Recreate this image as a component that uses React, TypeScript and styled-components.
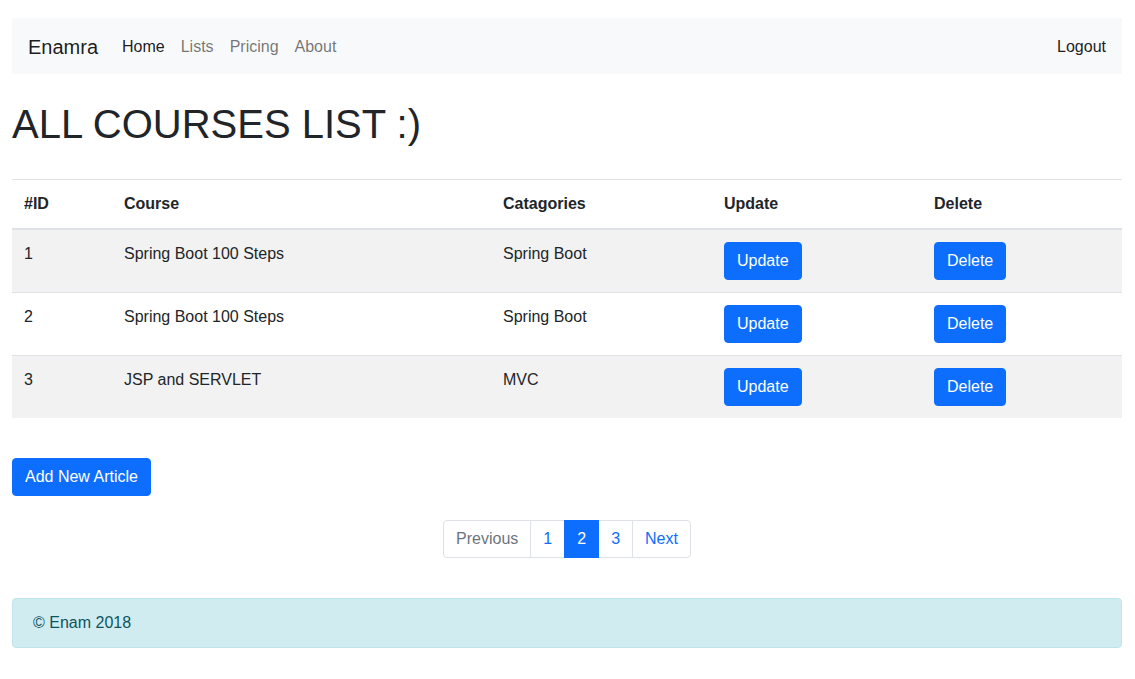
import React from "react";
import styled, { createGlobalStyle } from "styled-components";

const GlobalStyle = createGlobalStyle`
  * { box-sizing: border-box; }
  body {
    margin: 0;
    font-family: "Liberation Sans", Arial, sans-serif;
    font-size: 16px;
    line-height: 24px;
    color: #212529;
    background: #fff;
  }
`;

const Page = styled.div`
  width: 1110px;
  margin: 0 12px;
  padding-top: 18px;
`;

const Navbar = styled.nav`
  display: flex;
  align-items: center;
  height: 56px;
  padding: 1px 16px 0;
  background: #f8f9fa;
`;

const Brand = styled.a`
  font-size: 20px;
  line-height: 30px;
  color: rgba(0, 0, 0, 0.9);
  text-decoration: none;
  margin-right: 16px;
`;

const NavList = styled.div`
  display: flex;
  flex: 1;
`;

const NavLink = styled.a<{ $active?: boolean }>`
  padding: 8px;
  color: ${(p) => (p.$active ? "rgba(0,0,0,0.9)" : "rgba(0,0,0,0.55)")};
  text-decoration: none;
`;

const LogoutLink = styled.a`
  padding: 8px 0;
  color: rgba(0, 0, 0, 0.9);
  text-decoration: none;
`;

const Title = styled.h1`
  font-size: 40px;
  line-height: 48px;
  font-weight: 400;
  margin: 26px 0 31px;
`;

const Table = styled.table`
  width: 100%;
  border-collapse: collapse;
  margin-bottom: 40px;
`;

const Th = styled.th<{ $w?: number }>`
  text-align: left;
  font-weight: 700;
  padding: 12px;
  border-top: 1px solid #dee2e6;
  border-bottom: 2px solid #dee2e6;
  width: ${(p) => (p.$w ? `${p.$w}px` : "auto")};
`;

const Tr = styled.tr<{ $striped?: boolean }>`
  background: ${(p) => (p.$striped ? "#f2f2f2" : "#fff")};
`;

const Td = styled.td`
  padding: 12px;
  vertical-align: top;
  border-top: 1px solid #dee2e6;
`;

const Button = styled.button`
  font-family: inherit;
  font-size: 16px;
  line-height: 24px;
  padding: 6px 12px;
  color: #fff;
  background: #0d6efd;
  border: 1px solid #0d6efd;
  border-radius: 4px;
  cursor: pointer;
`;

const Pagination = styled.ul`
  display: flex;
  justify-content: center;
  list-style: none;
  padding: 0;
  margin: 24px 0 40px;
`;

const PageItem = styled.li<{ $active?: boolean; $disabled?: boolean; $first?: boolean; $last?: boolean }>`
  padding: 6px 12px;
  line-height: 24px;
  border: 1px solid ${(p) => (p.$active ? "#0d6efd" : "#dee2e6")};
  margin-left: ${(p) => (p.$first ? "0" : "-1px")};
  background: ${(p) => (p.$active ? "#0d6efd" : "#fff")};
  color: ${(p) => (p.$active ? "#fff" : p.$disabled ? "#6c757d" : "#0d6efd")};
  border-radius: ${(p) => (p.$first ? "4px 0 0 4px" : p.$last ? "0 4px 4px 0" : "0")};
  position: relative;
  z-index: ${(p) => (p.$active ? 1 : 0)};
`;

const Footer = styled.div`
  padding: 12px 20px;
  background: #d1ecf1;
  border: 1px solid #bee5eb;
  color: #0c5460;
  border-radius: 4px;
`;

const rows = [
  { id: 1, course: "Spring Boot 100 Steps", cat: "Spring Boot" },
  { id: 2, course: "Spring Boot 100 Steps", cat: "Spring Boot" },
  { id: 3, course: "JSP and SERVLET", cat: "MVC" },
];

export default function App() {
  return (
    <Page>
      <GlobalStyle />
      <Navbar>
        <Brand href="#">Enamra</Brand>
        <NavList>
          <NavLink $active href="#">Home</NavLink>
          <NavLink href="#">Lists</NavLink>
          <NavLink href="#">Pricing</NavLink>
          <NavLink href="#">About</NavLink>
        </NavList>
        <LogoutLink href="#">Logout</LogoutLink>
      </Navbar>
      <Title>ALL COURSES LIST :)</Title>
      <Table>
        <thead>
          <tr>
            <Th $w={100}>#ID</Th>
            <Th $w={379}>Course</Th>
            <Th $w={221}>Catagories</Th>
            <Th $w={210}>Update</Th>
            <Th>Delete</Th>
          </tr>
        </thead>
        <tbody>
          {rows.map((r, i) => (
            <Tr key={r.id} $striped={i % 2 === 0}>
              <Td>{r.id}</Td>
              <Td>{r.course}</Td>
              <Td>{r.cat}</Td>
              <Td><Button>Update</Button></Td>
              <Td><Button>Delete</Button></Td>
            </Tr>
          ))}
        </tbody>
      </Table>
      <Button>Add New Article</Button>
      <Pagination>
        <PageItem $first $disabled>Previous</PageItem>
        <PageItem>1</PageItem>
        <PageItem $active>2</PageItem>
        <PageItem>3</PageItem>
        <PageItem $last>Next</PageItem>
      </Pagination>
      <Footer>© Enam 2018</Footer>
    </Page>
  );
}
